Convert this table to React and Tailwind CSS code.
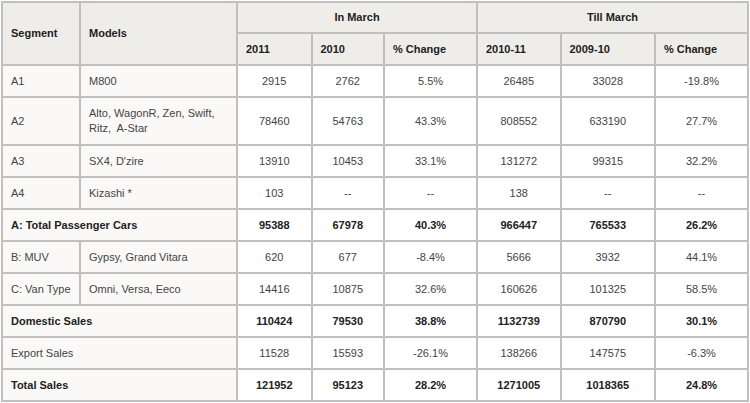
const rows = [
  { seg: "A1", models: ["M800"], vals: ["2915", "2762", "5.5%", "26485", "33028", "-19.8%"] },
  { seg: "A2", models: ["Alto, WagonR, Zen, Swift,", "Ritz,  A-Star"], vals: ["78460", "54763", "43.3%", "808552", "633190", "27.7%"], tall: true },
  { seg: "A3", models: ["SX4, D'zire"], vals: ["13910", "10453", "33.1%", "131272", "99315", "32.2%"] },
  { seg: "A4", models: ["Kizashi *"], vals: ["103", "--", "--", "138", "--", "--"] },
  { total: "A: Total Passenger Cars", bold: true, vals: ["95388", "67978", "40.3%", "966447", "765533", "26.2%"] },
  { seg: "B: MUV", models: ["Gypsy, Grand Vitara"], vals: ["620", "677", "-8.4%", "5666", "3932", "44.1%"] },
  { seg: "C: Van Type", models: ["Omni, Versa, Eeco"], vals: ["14416", "10875", "32.6%", "160626", "101325", "58.5%"] },
  { total: "Domestic Sales", bold: true, vals: ["110424", "79530", "38.8%", "1132739", "870790", "30.1%"] },
  { total: "Export Sales", vals: ["11528", "15593", "-26.1%", "138266", "147575", "-6.3%"] },
  { total: "Total Sales", bold: true, vals: ["121952", "95123", "28.2%", "1271005", "1018365", "24.8%"] },
];

const cell = "border-2 border-[#c0c0c0] px-[8px] py-0";

export default function App() {
  return (
    <div className="bg-white w-[750px] h-[403px] pt-px pl-px" style={{ fontFamily: '"Liberation Sans", Arial, sans-serif' }}>
      <table className="table-fixed border-collapse w-[748px] text-[11px] leading-[15px] text-[#444]">
        <colgroup>
          <col className="w-[78px]" />
          <col className="w-[157px]" />
          <col className="w-[74.5px]" />
          <col className="w-[72.5px]" />
          <col className="w-[93px]" />
          <col className="w-[83.5px]" />
          <col className="w-[94.5px]" />
          <col className="w-[93px]" />
        </colgroup>
        <thead className="bg-[#efedea] font-bold text-[#222]">
          <tr className="h-[31px]">
            <th rowSpan={2} className={`${cell} text-left`}>Segment</th>
            <th rowSpan={2} className={`${cell} text-left`}>Models</th>
            <th colSpan={3} className={`${cell} text-center`}>In March</th>
            <th colSpan={3} className={`${cell} text-center`}>Till March</th>
          </tr>
          <tr className="h-[32px]">
            <th className={`${cell} text-left`}>2011</th>
            <th className={`${cell} text-left`}>2010</th>
            <th className={`${cell} text-left`}>% Change</th>
            <th className={`${cell} text-left`}>2010-11</th>
            <th className={`${cell} text-left`}>2009-10</th>
            <th className={`${cell} text-left`}>% Change</th>
          </tr>
        </thead>
        <tbody>
          {rows.map((r, i) => (
            <tr key={i} className={r.tall ? "h-[48px]" : "h-[32px]"}>
              {r.total ? (
                <td colSpan={2} className={`${cell} bg-[#faf9f7] ${r.bold ? "font-bold text-[#222]" : ""}`}>
                  {r.total}
                </td>
              ) : (
                <>
                  <td className={`${cell} bg-[#faf9f7]`}>{r.seg}</td>
                  <td className={`${cell} bg-[#faf9f7]`}>
                    {r.models.map((m, j) => (
                      <div key={j} className="whitespace-pre">{m}</div>
                    ))}
                  </td>
                </>
              )}
              {r.vals.map((v, j) => (
                <td key={j} className={`${cell} text-center ${r.bold ? "font-bold text-[#222]" : ""}`}>
                  {v}
                </td>
              ))}
            </tr>
          ))}
        </tbody>
      </table>
    </div>
  );
}
